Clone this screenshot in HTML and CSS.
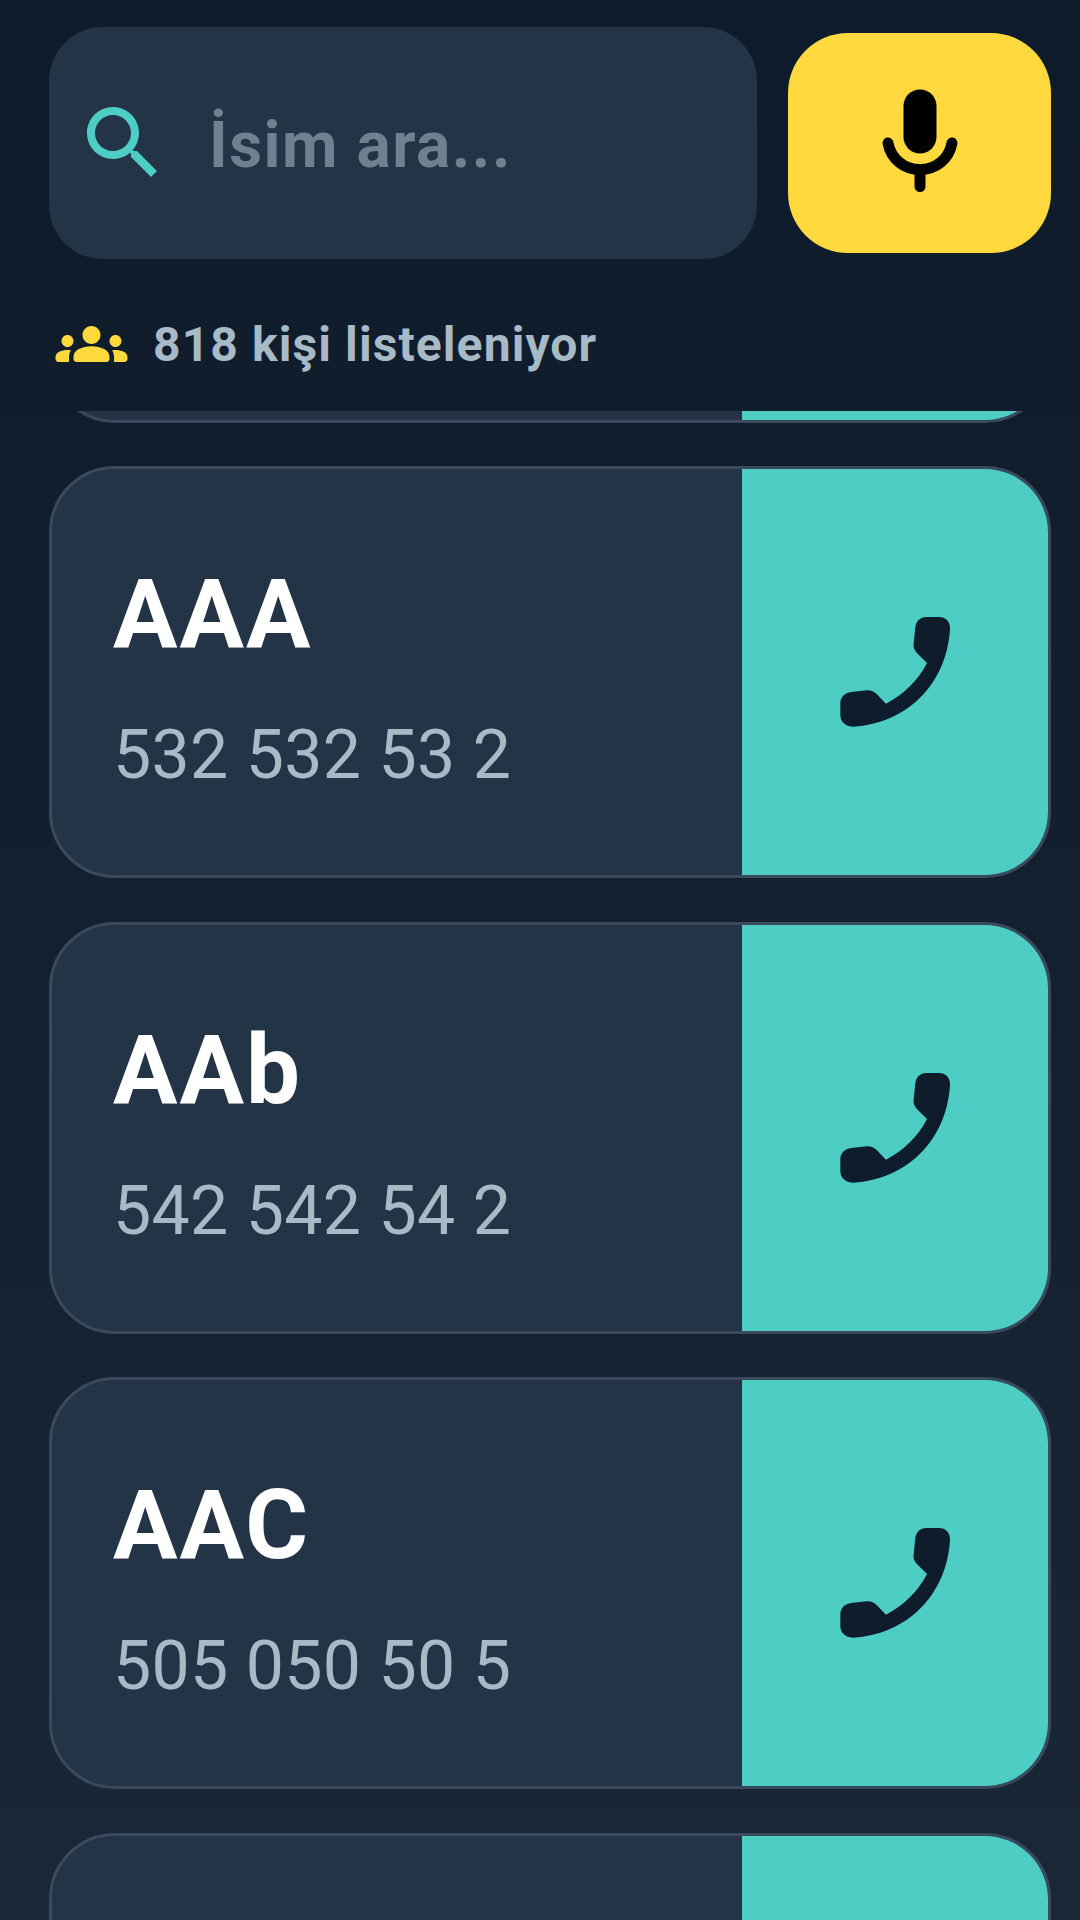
FILE: index.html
```html
<!DOCTYPE html>
<html lang="tr">
<head>
    <meta charset="UTF-8">
    <meta name="viewport" content="width=device-width, initial-scale=1.0">
    <title>Rehber</title>
    <link rel="stylesheet" href="styles.css">
</head>
<body>
    <div class="app">
        <div class="top-bar">
            <div class="search-box">
                <svg class="search-icon" viewBox="0 0 24 24"><path d="M15.5 14h-.79l-.28-.27C15.41 12.59 16 11.11 16 9.5 16 5.91 13.09 3 9.5 3S3 5.91 3 9.5 5.91 16 9.5 16c1.61 0 3.09-.59 4.23-1.57l.27.28v.79l5 4.99L20.49 19l-4.99-5zm-6 0C7.01 14 5 11.99 5 9.5S7.01 5 9.5 5 14 7.01 14 9.5 11.99 14 9.5 14z"/></svg>
                <span class="search-placeholder">İsim ara...</span>
            </div>
            <div class="mic-button">
                <svg class="mic-icon" viewBox="0 0 120 120">
                    <rect x="43.5" y="6.5" width="33" height="64" rx="16.5"/>
                    <path class="mic-stand" d="M28 60C31 76 44 86.5 60 86.5S89 76 92 60M60 86.5V103.5"/>
                </svg>
            </div>
        </div>

        <div class="count-row">
            <svg class="count-icon" viewBox="0 0 24 24"><path d="M12 12.75c1.63 0 3.07.39 4.24.9 1.08.48 1.76 1.56 1.76 2.73V17c0 .55-.45 1-1 1H7c-.55 0-1-.45-1-1v-.61c0-1.18.68-2.26 1.76-2.73 1.17-.52 2.61-.91 4.24-.91zM4 13c1.1 0 2-.9 2-2s-.9-2-2-2-2 .9-2 2 .9 2 2 2zm1.13 1.1c-.37-.06-.74-.1-1.13-.1-.99 0-1.93.21-2.78.58C.48 14.9 0 15.62 0 16.43V17c0 .55.45 1 1 1h3.5v-1.61c0-.83.23-1.61.63-2.29zM20 13c1.1 0 2-.9 2-2s-.9-2-2-2-2 .9-2 2 .9 2 2 2zm4 3.43c0-.81-.48-1.53-1.22-1.85-.85-.37-1.79-.58-2.78-.58-.39 0-.76.04-1.13.1.4.68.63 1.46.63 2.29V18H23c.55 0 1-.45 1-1v-.57zM12 6c1.66 0 3 1.34 3 3s-1.34 3-3 3-3-1.34-3-3 1.34-3 3-3z"/></svg>
            <span class="count-text">818 kişi listeleniyor</span>
        </div>

        <div class="contact-list">
            <div class="contact-card scrolled-card">
                <div class="contact-info"></div>
                <div class="call-action"></div>
            </div>

            <div class="contact-card">
                <div class="contact-info">
                    <div class="contact-name">AAA</div>
                    <div class="contact-phone">532 532 53 2</div>
                </div>
                <div class="call-action">
                    <svg class="call-icon" viewBox="120 113 330 330"><path d="M378 113H418C438 113 451 128 450 148C441 312 322 432 160 442C138 443 121 428 121 408V372C121 353 135 340 153 338L200 333C212 332 222 336 230 344L258 373C310 346 354 304 381 251L350 220C343 212 339 203 341 192L346 143C348 126 361 113 378 113Z"/></svg>
                </div>
            </div>

            <div class="contact-card">
                <div class="contact-info">
                    <div class="contact-name">AAb</div>
                    <div class="contact-phone">542 542 54 2</div>
                </div>
                <div class="call-action">
                    <svg class="call-icon" viewBox="120 113 330 330"><path d="M378 113H418C438 113 451 128 450 148C441 312 322 432 160 442C138 443 121 428 121 408V372C121 353 135 340 153 338L200 333C212 332 222 336 230 344L258 373C310 346 354 304 381 251L350 220C343 212 339 203 341 192L346 143C348 126 361 113 378 113Z"/></svg>
                </div>
            </div>

            <div class="contact-card">
                <div class="contact-info">
                    <div class="contact-name">AAC</div>
                    <div class="contact-phone">505 050 50 5</div>
                </div>
                <div class="call-action">
                    <svg class="call-icon" viewBox="120 113 330 330"><path d="M378 113H418C438 113 451 128 450 148C441 312 322 432 160 442C138 443 121 428 121 408V372C121 353 135 340 153 338L200 333C212 332 222 336 230 344L258 373C310 346 354 304 381 251L350 220C343 212 339 203 341 192L346 143C348 126 361 113 378 113Z"/></svg>
                </div>
            </div>

            <div class="contact-card">
                <div class="contact-info"></div>
                <div class="call-action"></div>
            </div>
        </div>
    </div>
</body>
</html>
```
FILE: styles.css
```css
* {
    box-sizing: border-box;
}

body {
    margin: 0;
    font-family: Roboto, "Noto Sans", sans-serif;
    background: #14202f;
}

.app {
    display: flex;
    flex-direction: column;
    height: 1920px;
    overflow: hidden;
    background: linear-gradient(180deg, #0e1b2b 0%, #14202f 50%, #1a2737 100%);
}

.top-bar {
    display: flex;
    align-items: center;
    gap: 31px;
    padding: 27px 29px 0 49px;
}

.search-box {
    display: flex;
    align-items: center;
    flex: 1;
    height: 232px;
    padding-left: 26px;
    background: #233447;
    border-radius: 54px;
}

.search-icon {
    width: 96px;
    height: 96px;
    fill: #4ecdc4;
}

.search-placeholder {
    margin: 4px 0 0 38px;
    font-size: 64px;
    font-weight: 700;
    letter-spacing: 1.5px;
    color: #6f8090;
}

.mic-button {
    display: flex;
    align-items: center;
    justify-content: center;
    width: 263px;
    height: 220px;
    background: #ffd93d;
    border-radius: 60px;
}

.mic-icon {
    width: 120px;
    height: 120px;
    fill: #000;
}

.mic-stand {
    fill: none;
    stroke: #000;
    stroke-width: 11;
    stroke-linecap: round;
}

.count-row {
    display: flex;
    align-items: center;
    gap: 25px;
    margin-top: 49px;
    padding-left: 55px;
}

.count-icon {
    width: 73px;
    height: 72px;
    fill: #ffd93d;
}

.count-text {
    font-size: 48px;
    font-weight: 700;
    letter-spacing: 1.1px;
    color: #a9bac7;
}

.contact-list {
    display: flex;
    flex-direction: column;
    gap: 43.5px;
    flex: 1;
    min-height: 0;
    margin-top: 31px;
    padding: 0 29px 0 49px;
    overflow: hidden;
}

.contact-card {
    display: flex;
    flex: none;
    height: 412px;
    background: #233447;
    border: 3px solid #3a4a5c;
    border-radius: 66px;
    overflow: hidden;
}

.scrolled-card {
    margin-top: -400.5px;
}

.contact-info {
    display: flex;
    flex-direction: column;
    justify-content: center;
    flex: 1;
    padding: 9px 0 0 61px;
}

.contact-name {
    font-size: 96px;
    font-weight: 700;
    letter-spacing: 2px;
    line-height: 112px;
    color: #fff;
}

.contact-phone {
    margin-top: 45px;
    font-size: 68px;
    letter-spacing: 0.3px;
    line-height: 80px;
    color: #a9bac7;
}

.call-action {
    display: flex;
    align-items: center;
    justify-content: center;
    flex: none;
    width: 306px;
    background: #4ecdc4;
}

.call-icon {
    width: 110px;
    height: 110px;
    fill: #0f1c2c;
}
```
